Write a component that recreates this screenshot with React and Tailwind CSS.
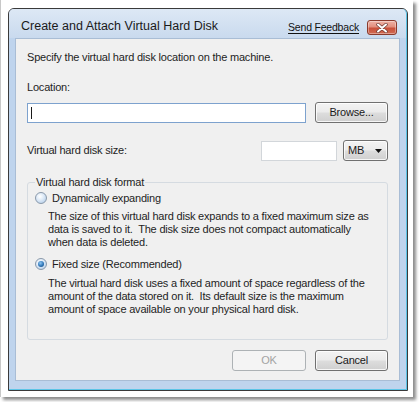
import React from "react";

const font = { fontFamily: '"Liberation Sans", Arial, sans-serif' };

function Button({ children, disabled = false, className = "", spread = false }) {
  const base = "flex items-center rounded-[3px] border text-[11px] leading-none";
  const enabled =
    "border-[#707070] bg-[linear-gradient(#f3f3f3_0%,#ebebeb_48%,#dddddd_52%,#cfcfcf_100%)] text-[#1a1a1a] shadow-[inset_0_0_0_1px_rgba(255,255,255,0.8)]";
  const off = "border-[#adb2b5] bg-[#f4f4f4] text-[#a3a3a3]";
  return (
    <div
      className={[
        base,
        spread ? "justify-between" : "justify-center",
        disabled ? off : enabled,
        className,
      ].join(" ")}
    >
      {children}
    </div>
  );
}

function Radio({ checked }) {
  return (
    <span className="relative flex h-[12px] w-[12px] shrink-0 items-center justify-center rounded-full border border-[#8a99aa] bg-[radial-gradient(circle_at_40%_35%,#ffffff_0%,#dbe8f6_45%,#a9c6e6_100%)]">
      {checked && (
        <span className="h-[6px] w-[6px] rounded-full bg-[radial-gradient(circle_at_40%_35%,#8fc6f2_0%,#2f76b8_55%,#143f6b_100%)]" />
      )}
    </span>
  );
}

function CloseButton() {
  return (
    <div className="flex h-[15px] w-[30px] items-center justify-center rounded-[3px] border border-[#8a3a2c] bg-[linear-gradient(#eeb2a6_0%,#e28f7e_45%,#c9503a_55%,#d06a52_100%)] shadow-[inset_0_0_0_1px_rgba(255,255,255,0.35)]">
      <svg width="12" height="10" viewBox="0 0 12 10">
        <path d="M2 1.5 L10 8.5 M10 1.5 L2 8.5" stroke="#6b3a33" strokeWidth="3.4" strokeLinecap="round" />
        <path d="M2 1.5 L10 8.5 M10 1.5 L2 8.5" stroke="#ffffff" strokeWidth="2" strokeLinecap="round" />
      </svg>
    </div>
  );
}

export default function App() {
  return (
    <div className="h-[402px] w-[420px] bg-white" style={font}>
      <div className="h-[397px] w-[413px] border-l border-[#c8c8c8] bg-white pl-[7px] pt-[8px] shadow-[3px_3px_3px_rgba(0,0,0,0.45)]">
        <div className="flex h-[383px] w-[400px] flex-col rounded-t-[6px] border border-[#3a3a3a] bg-[#bfd4ed]">
          <div className="flex h-full flex-col rounded-t-[5px] border-b border-r border-[#5cc4e6] bg-[linear-gradient(#dde8f5_0px,#c9daee_29px,#bfd4ed_29px)]">
            <div className="flex h-[29px] items-center pl-[12px] pr-[9px] pt-[6px]">
              <span className="text-[12.5px] text-[#1a1a1a]">
                Create and Attach Virtual Hard Disk
              </span>
              <span className="ml-auto mt-[2px] text-[10.5px] tracking-[-0.2px] text-[#111] underline underline-offset-[2px]">
                Send Feedback
              </span>
              <div className="ml-[8px] mt-[2px]">
                <CloseButton />
              </div>
            </div>

            <div className="flex-1 px-[6px] pb-[8px]">
              <div className="flex h-full flex-col border border-[#a9bdd5] bg-[#f0f0f0] px-[11px] text-[11px] leading-[13px] tracking-[-0.2px] text-[#1e1e1e]">
                <p className="mt-[12px]">
                  Specify the virtual hard disk location on the machine.
                </p>
                <p className="mt-[17px]">Location:</p>

                <div className="mt-[8px] flex h-[21px] items-center">
                  <div className="flex h-[20px] w-[279px] items-center border border-[#7da2ce] bg-white pl-[3px]">
                    <span className="h-[12px] w-px bg-[#1a1a1a]" />
                  </div>
                  <Button className="ml-auto h-[21px] w-[73px]">Browse...</Button>
                </div>

                <div className="mt-[17px] flex h-[21px] items-center">
                  <span>Virtual hard disk size:</span>
                  <div className="ml-auto h-[20px] w-[76px] border border-[#d2d6da] bg-white" />
                  <Button spread className="ml-[6px] h-[21px] w-[45px] pl-[4px] pr-[5px]">
                    <span>MB</span>
                    <svg width="7" height="4" viewBox="0 0 7 4">
                      <path d="M0 0 H7 L3.5 4 Z" fill="#111" />
                    </svg>
                  </Button>
                </div>

                <fieldset className="mt-[15px] rounded-[3px] border border-[#d5dbe1] px-[7px] pb-[23px]">
                  <legend className="px-[1px] leading-[13px]">Virtual hard disk format</legend>
                  <div className="mt-[1px] flex h-[16px] items-center gap-[5px]">
                    <Radio />
                    <span>Dynamically expanding</span>
                  </div>
                  <p className="ml-[13px] mt-[4px] whitespace-nowrap">
                    The size of this virtual hard disk expands to a fixed maximum size as
                    <br />
                    data is saved to it.&nbsp; The disk size does not compact automatically
                    <br />
                    when data is deleted.
                  </p>
                  <div className="mt-[7px] flex h-[16px] items-center gap-[5px]">
                    <Radio checked />
                    <span>Fixed size (Recommended)</span>
                  </div>
                  <p className="ml-[13px] mt-[5px] whitespace-nowrap">
                    The virtual hard disk uses a fixed amount of space regardless of the
                    <br />
                    amount of the data stored on it.&nbsp; Its default size is the maximum
                    <br />
                    amount of space available on your physical hard disk.
                  </p>
                </fieldset>

                <div className="mt-[10px] flex justify-end gap-[9px]">
                  <Button disabled className="h-[21px] w-[74px]">OK</Button>
                  <Button className="h-[21px] w-[73px]">Cancel</Button>
                </div>
              </div>
            </div>
          </div>
        </div>
      </div>
    </div>
  );
}
